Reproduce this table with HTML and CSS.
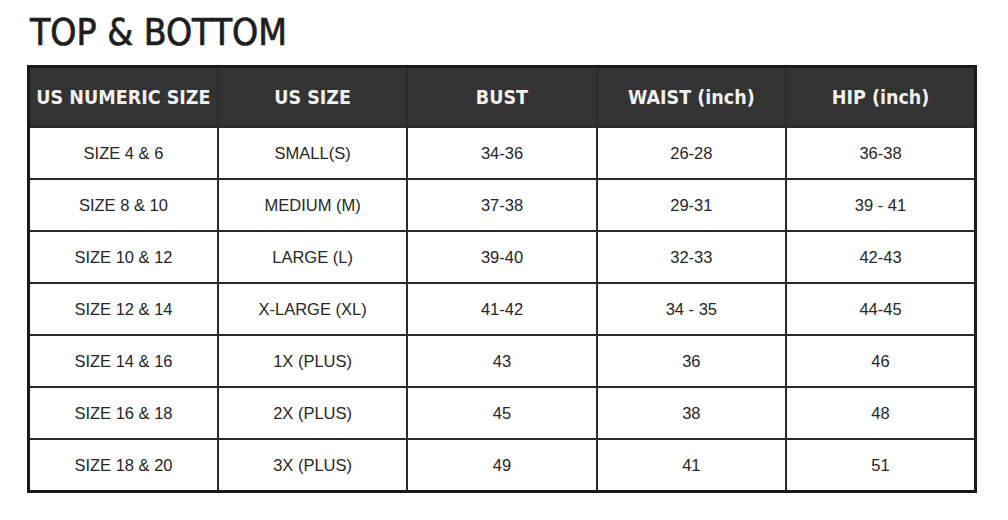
FILE: index.html
```html
<!DOCTYPE html>
<html>
<head>
<meta charset="utf-8">
<link rel="stylesheet" href="styles.css">
</head>
<body>
<div class="page">
  <h1 class="title">TOP &amp; BOTTOM</h1>
  <table class="chart">
    <thead>
      <tr>
        <th>US NUMERIC SIZE</th>
        <th>US SIZE</th>
        <th>BUST</th>
        <th>WAIST (inch)</th>
        <th>HIP (inch)</th>
      </tr>
    </thead>
    <tbody>
      <tr><td>SIZE 4 &amp; 6</td><td>SMALL(S)</td><td>34-36</td><td>26-28</td><td>36-38</td></tr>
      <tr><td>SIZE 8 &amp; 10</td><td>MEDIUM (M)</td><td>37-38</td><td>29-31</td><td>39 - 41</td></tr>
      <tr><td>SIZE 10 &amp; 12</td><td>LARGE (L)</td><td>39-40</td><td>32-33</td><td>42-43</td></tr>
      <tr><td>SIZE 12 &amp; 14</td><td>X-LARGE (XL)</td><td>41-42</td><td>34 - 35</td><td>44-45</td></tr>
      <tr><td>SIZE 14 &amp; 16</td><td>1X (PLUS)</td><td>43</td><td>36</td><td>46</td></tr>
      <tr><td>SIZE 16 &amp; 18</td><td>2X (PLUS)</td><td>45</td><td>38</td><td>48</td></tr>
      <tr><td>SIZE 18 &amp; 20</td><td>3X (PLUS)</td><td>49</td><td>41</td><td>51</td></tr>
    </tbody>
  </table>
</div>
</body>
</html>
```
FILE: styles.css
```css
html, body {
  margin: 0;
  padding: 0;
  background: #ffffff;
}

.page {
  padding: 13px 0 0 27px;
}

.title {
  margin: 0 0 13px 3px;
  font-family: "DejaVu Sans Condensed", "DejaVu Sans", sans-serif;
  font-weight: normal;
  font-size: 37px;
  line-height: 39px;
  color: #1e1e1e;
  -webkit-text-stroke: 0.7px #1e1e1e;
}

.chart {
  border-collapse: collapse;
  width: 950px;
  table-layout: fixed;
  border: 3px solid #1a1a1a;
}

.chart th,
.chart td {
  border: 2px solid #2a2a2a;
  text-align: center;
  padding: 0;
}

.chart th {
  background: #333333;
  color: #f0f0f0;
  height: 57px;
  font-family: "DejaVu Sans Condensed", "DejaVu Sans", sans-serif;
  font-weight: bold;
  font-size: 19.5px;
  padding-top: 1px;
}

.chart td {
  height: 50px;
  font-family: "Liberation Sans", Arial, sans-serif;
  font-size: 16.5px;
  color: #262626;
}
```
